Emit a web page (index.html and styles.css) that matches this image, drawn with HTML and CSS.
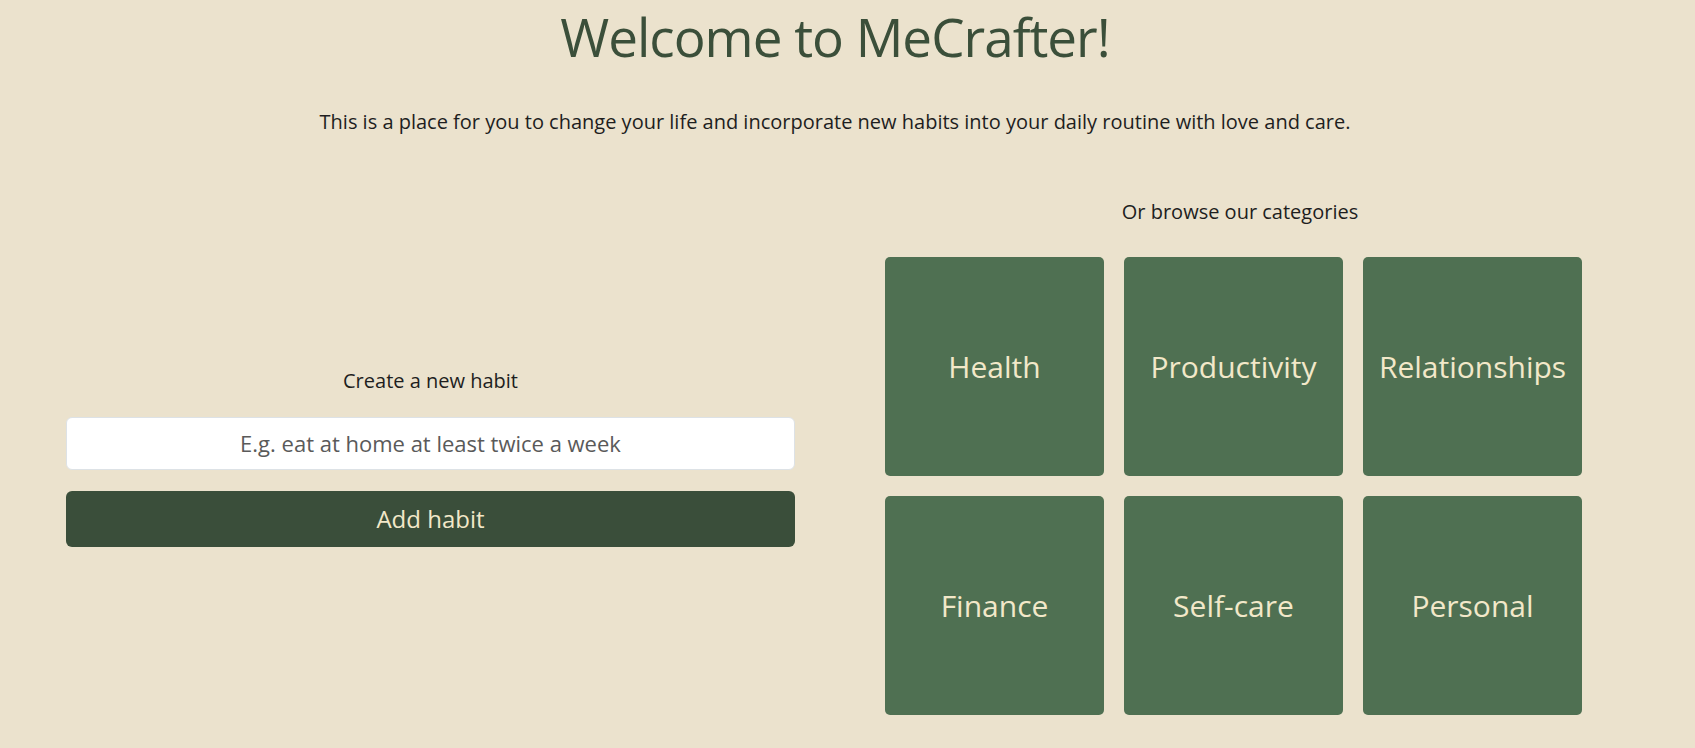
FILE: index.html
```html
<!DOCTYPE html>
<html lang="en">
<head>
<meta charset="utf-8">
<title>MeCrafter</title>
<link rel="stylesheet" href="styles.css">
</head>
<body>
  <header class="hero">
    <h1 class="hero-title">Welcome to MeCrafter!</h1>
    <p class="hero-text">This is a place for you to change your life and incorporate new habits into your daily routine with love and care.</p>
  </header>
  <main class="main">
    <section class="create">
      <p class="create-label">Create a new habit</p>
      <input class="create-input" type="text" placeholder="E.g. eat at home at least twice a week">
      <button class="create-button" type="button">Add habit</button>
    </section>
    <section class="browse">
      <p class="browse-label">Or browse our categories</p>
      <div class="grid">
        <div class="card">Health</div>
        <div class="card">Productivity</div>
        <div class="card">Relationships</div>
        <div class="card">Finance</div>
        <div class="card">Self-care</div>
        <div class="card">Personal</div>
      </div>
    </section>
  </main>
</body>
</html>
```
FILE: styles.css
```css
html, body {
  margin: 0;
  padding: 0;
}
body {
  background: #ebe2cd;
  font-family: "Comic Sans MS", "Open Sans", sans-serif;
  color: #1e1e1e;
  width: 1695px;
  height: 748px;
  overflow: hidden;
}
.hero {
  width: 1670px;
  text-align: center;
  padding-top: 2px;
}
.hero-title {
  margin: 0;
  font-size: 53px;
  line-height: 70px;
  letter-spacing: -1px;
  font-weight: 400;
  color: #3b4f3a;
}
.hero-text {
  margin: 38px 0 0;
  font-size: 20px;
  line-height: 24px;
}
.main {
  display: flex;
  align-items: center;
  gap: 90px;
  padding-left: 66px;
  margin-top: 66px;
}
.create {
  width: 729px;
  display: flex;
  flex-direction: column;
  align-items: stretch;
  text-align: center;
}
.create-label {
  margin: 0;
  font-size: 20px;
  line-height: 24px;
}
.create-input {
  margin-top: 24px;
  height: 53px;
  box-sizing: border-box;
  border: 1px solid #dde2e6;
  border-radius: 6px;
  background: #ffffff;
  font-family: inherit;
  font-size: 22px;
  text-align: center;
  color: #333;
  outline: none;
}
.create-input::placeholder {
  color: #5a5a5a;
}
.create-button {
  margin-top: 21px;
  height: 56px;
  border: none;
  border-radius: 6px;
  background: #3a4e3a;
  color: #f2e8c9;
  font-family: inherit;
  font-size: 24px;
  cursor: pointer;
}
.browse {
  width: 710px;
  display: flex;
  flex-direction: column;
}
.browse-label {
  margin: 0 0 33px;
  text-align: center;
  font-size: 20px;
  line-height: 24px;
}
.grid {
  display: grid;
  grid-template-columns: repeat(3, 219px);
  grid-auto-rows: 219px;
  gap: 20px;
}
.card {
  background: #4f7052;
  border-radius: 5px;
  color: #f2e8c9;
  font-size: 30px;
  display: flex;
  align-items: center;
  justify-content: center;
}
```
